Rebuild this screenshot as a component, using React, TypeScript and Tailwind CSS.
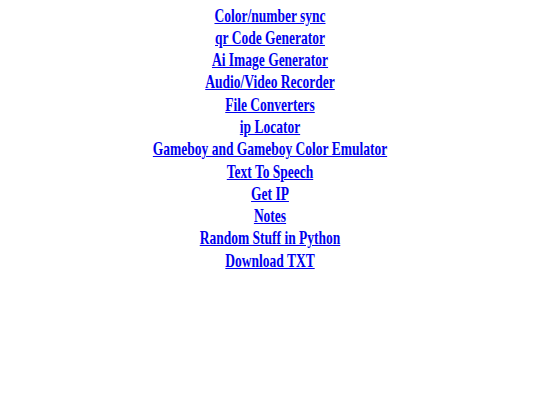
const links = [
  'Color/number sync',
  'qr Code Generator',
  'Ai Image Generator',
  'Audio/Video Recorder',
  'File Converters',
  'ip Locator',
  'Gameboy and Gameboy Color Emulator',
  'Text To Speech',
  'Get IP',
  'Notes',
  'Random Stuff in Python',
  'Download TXT',
];

export default function App() {
  return (
    <div className="min-h-[405px] bg-white pt-[4.5px] font-['Liberation_Serif',serif]">
      {/* the page looks horizontally squeezed, so the list is scaled on x */}
      <div className="flex flex-col items-center scale-x-[0.71] origin-top">
        {links.map((label) => (
          <a
            key={label}
            href="#"
            className="block text-[19px] leading-[22.3px] font-bold text-[#0000ee] underline"
          >
            {label}
          </a>
        ))}
      </div>
    </div>
  );
}
